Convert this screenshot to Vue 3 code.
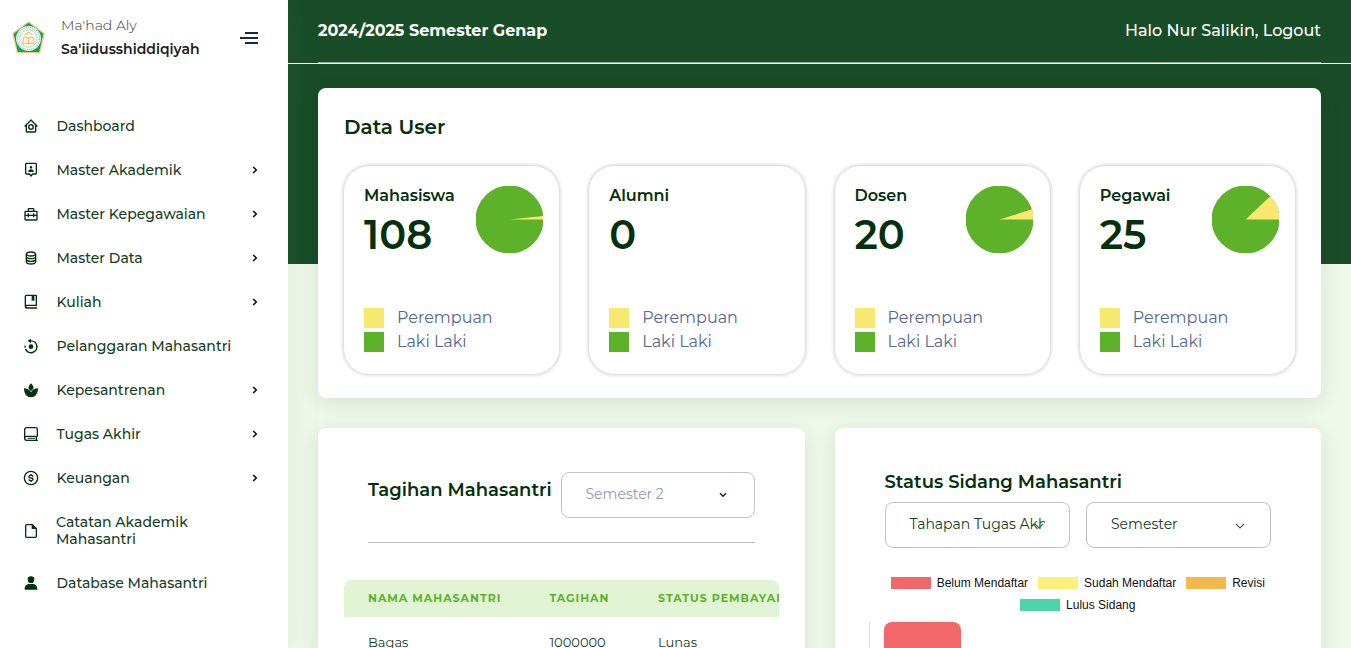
<script setup>
const menu = [
  { label: 'Dashboard', icon: 'home' },
  { label: 'Master Akademik', icon: 'badge', more: true },
  { label: 'Master Kepegawaian', icon: 'toolbox', more: true },
  { label: 'Master Data', icon: 'data', more: true },
  { label: 'Kuliah', icon: 'book', more: true },
  { label: 'Pelanggaran Mahasantri', icon: 'rotate' },
  { label: 'Kepesantrenan', icon: 'spa', more: true },
  { label: 'Tugas Akhir', icon: 'journal', more: true },
  { label: 'Keuangan', icon: 'coin', more: true },
  { label: 'Catatan Akademik Mahasantri', icon: 'file', tall: true },
  { label: 'Database Mahasantri', icon: 'person' },
]

const icons = {
  home: [{ d: 'M3 13h1v7c0 1.100.9 2 2 2h12c1.100 0 2-.9 2-2v-7h1a1 1 0 0 0 .7-1.700l-9-9a1 1 0 0 0-1.400 0l-9 9A1 1 0 0 0 3 13zm9-8.600 6 6V20H6v-9.600l6-6z' }, { d: 'M12 18c2.700 0 4.500-1.800 4.500-4.500S14.700 9 12 9s-4.500 1.800-4.500 4.500S9.300 18 12 18zm0-6.800c1.400 0 2.300.9 2.300 2.300s-.9 2.300-2.300 2.300-2.300-.9-2.300-2.300.9-2.300 2.300-2.300z' }],
  badge: [{ d: 'M12 10c1.200 0 2-.9 2-2s-.9-2-2-2-2 .9-2 2 .8 2 2 2zm4 4c0-2-1.800-3-4-3s-4 1-4 3v1h8v-1z' }, { d: 'M19 1H5a2 2 0 0 0-2 2v14c0 1.100.9 2 2 2h4l3 3.500 3-3.500h4a2 2 0 0 0 2-2V3a2 2 0 0 0-2-2zM5 17V3h14v14h-4.800L12 19.200 9.800 17H5z' }],
  toolbox: [{ d: 'M20 7h-3V5a2 2 0 0 0-2-2H9a2 2 0 0 0-2 2v2H4a2 2 0 0 0-2 2v11a2 2 0 0 0 2 2h16a2 2 0 0 0 2-2V9a2 2 0 0 0-2-2zM9 5h6v2H9V5zM4 9h16v4h-3v-2h-2v2H9v-2H7v2H4V9zm0 11v-5h3v2h2v-2h6v2h2v-2h3v5H4z' }],
  data: [{ d: 'M20 6c0-2.200-3.600-4-8-4S4 3.800 4 6v12c0 2.200 3.600 4 8 4s8-1.800 8-4V6zm-8-2c3.700 0 6 1.400 6 2s-2.300 2-6 2-6-1.400-6-2 2.300-2 6-2zM6 8.700C7.500 9.500 9.600 10 12 10s4.500-.5 6-1.300V10c0 .6-2.300 2-6 2s-6-1.400-6-2V8.700zm0 4c1.500.8 3.600 1.300 6 1.300s4.500-.5 6-1.300V14c0 .6-2.300 2-6 2s-6-1.400-6-2v-1.300zM12 20c-3.700 0-6-1.400-6-2v-1.300c1.500.8 3.600 1.300 6 1.300s4.500-.5 6-1.300V18c0 .6-2.300 2-6 2z' }],
  book: [{ d: 'M19 1H5a2.500 2.500 0 0 0-2.500 2.500V19A3 3 0 0 0 5.500 22H21v-2H6a1 1 0 0 1 0-2h15V3a2 2 0 0 0-2-2zm0 15H4.500V4a1 1 0 0 1 1-1H13v8l2-1.500 2 1.500V3h2v13z' }],
  rotate: [{ d: 'M12 16.500a3.500 3.500 0 1 0 0-7 3.500 3.500 0 0 0 0 7z' }, { d: 'M12 3.200V1L7 4.300 12 8V5.400a7.700 7.700 0 1 1-7.200 10.500l-2.200.8A10 10 0 1 0 12 3.200z' }, { d: 'M2.200 11.200l2.200.5-.2 2.500H1.900z' }],
  spa: [{ d: 'M16 9.500 12 14l-4-4.500C8.500 6.500 10 3.500 12 2c2 1.500 3.500 4.500 4 7.500z' }, { d: 'M1.500 9.500c4.700 0 8.500 2 10.500 6 2-4 5.800-6 10.500-6C22.500 18 18 23 12 23S1.500 18 1.500 9.500z' }],
  journal: [{ d: 'M19 1.500H5.500A4 4 0 0 0 1.500 5.500v13a4 4 0 0 0 4 4h16a1 1 0 0 0 0-2h-.500v-4a2 2 0 0 0 1.500-2V5a3.500 3.500 0 0 0-3.500-3.500zM5.500 3.500H19A1.500 1.500 0 0 1 20.500 5v9.500h-15c-.7 0-1.400.2-2 .5V5.500c0-1.100.9-2 2-2zm13.500 17H5.500a2 2 0 0 1 0-4H19v4z' }, { d: 'M7 17.700h11v1.500H7z' }],
  coin: [{ d: 'M12 1a11 11 0 1 0 0 22 11 11 0 0 0 0-22zm0 20a9 9 0 1 1 0-18 9 9 0 0 1 0 18z' }, { d: 'M12 11c-1.700 0-2-.5-2-1s.6-1 2-1 1.800.7 1.800 1.200h2c0-1.500-1-2.600-2.700-3V6h-2v1.200C8.900 7.600 8 8.900 8 10c0 1.200.7 3 4 3 1.600 0 2 .6 2 1s-.5 1.100-2 1.100-2.200-.8-2.200-1.400h-2c0 1.400 1.100 2.800 3.200 3.200V18h2v-1.100c2.200-.4 3-1.800 3-2.900 0-1-.5-3-4-3z' }],
  file: [{ d: 'M14.500 1.500H5.500A2.500 2.500 0 0 0 3 4v16a2.500 2.500 0 0 0 2.500 2.500h13A2.500 2.500 0 0 0 21 20V8zM19 20c0 .3-.2.500-.5.500h-13A.5.5 0 0 1 5 20V4c0-.3.2-.5.500-.5H13V9h6z' }],
  person: [{ d: 'M12 12a5 5 0 1 0 0-10 5 5 0 0 0 0 10zM2.500 20.500C2.500 16 6 13.500 9 13.500h6c3 0 6.500 2.500 6.500 7v1.500h-19z' }],
}

const pie = { r: 34, c: 33.5 }
const slice = (deg) => {
  const a = (deg * Math.PI) / 180
  const x = pie.c + pie.r * Math.cos(a)
  const y = pie.c - pie.r * Math.sin(a)
  return `M${pie.c} ${pie.c}H${pie.c + pie.r}A${pie.r} ${pie.r} 0 0 0 ${x} ${y}Z`
}

const stats = [
  { label: 'Mahasiswa', total: 108, angle: 6 },
  { label: 'Alumni', total: 0 },
  { label: 'Dosen', total: 20, angle: 17.5 },
  { label: 'Pegawai', total: 25, angle: 43.2 },
]

const legend = [
  [
    { label: 'Belum Mendaftar', tone: 'red' },
    { label: 'Sudah Mendaftar', tone: 'yellow' },
    { label: 'Revisi', tone: 'orange' },
  ],
  [{ label: 'Lulus Sidang', tone: 'teal' }],
]
</script>

<template>
  <div class="page">
    <aside class="sidebar">
      <div class="brand">
        <svg class="logo" viewBox="0 0 34 34">
          <path d="M17 1 33 13 28.500 32.500H5.500L1 13Z" fill="#12a05c" stroke="#f0c67e" stroke-width="1.300" stroke-linejoin="round" />
          <circle cx="17" cy="18" r="12.800" fill="#fff" />
          <circle cx="17" cy="18" r="11.500" fill="none" stroke="#8fd3b0" stroke-width="1.300" stroke-dasharray="1.500 .8" />
          <circle cx="17" cy="18" r="9" fill="#fdf8ea" stroke="#8fd3b0" stroke-width=".8" />
          <path d="M11.500 17.500q3-1.500 5.500.5q2.500-2 5.500-.5v6q-3-1.500-5.500.3q-2.500-1.800-5.500-.3zM17 18v6M13 14.500l4-3 4 3" fill="none" stroke="#efc274" stroke-width="1.200" />
        </svg>
        <div class="brand-text">
          <span class="brand-top">Ma'had Aly</span>
          <span class="brand-name">Sa'iidusshiddiqiyah</span>
        </div>
        <svg class="burger" viewBox="0 0 18 12"><path d="M5 0h13v2H5zM0 5h18v2H0zM5 10h13v2H5z" fill="#16264f" /></svg>
      </div>
      <nav class="menu">
        <a v-for="item in menu" :key="item.label" class="item" :class="{ tall: item.tall }">
          <svg class="icon" viewBox="0 0 24 24"><path v-for="p in icons[item.icon]" :key="p.d" :d="p.d" fill-rule="evenodd" /></svg>
          <span class="item-label">{{ item.label }}</span>
          <svg v-if="item.more" class="arrow" viewBox="0 0 6 8"><path d="M1.200 1 4.300 4 1.200 7" /></svg>
        </a>
      </nav>
    </aside>

    <main class="main">
      <header class="topbar">
        <div class="topbar-row">
          <span class="period">2024/2025 Semester Genap</span>
          <span class="hello">Halo Nur Salikin, Logout</span>
        </div>
      </header>

      <div class="content">
        <section class="card users">
          <h2 class="users-title">Data User</h2>
          <div class="stats">
            <article v-for="s in stats" :key="s.label" class="stat">
              <div class="stat-top">
                <div>
                  <div class="stat-label">{{ s.label }}</div>
                  <div class="stat-total">{{ s.total }}</div>
                </div>
                <svg v-if="s.angle" class="pie" viewBox="0 0 67 67">
                  <circle :cx="pie.c" :cy="pie.c" :r="pie.r" fill="#5eb229" />
                  <path :d="slice(s.angle)" fill="#f7e86f" />
                </svg>
              </div>
              <ul class="keys">
                <li><i class="swatch female"></i><span>Perempuan</span></li>
                <li><i class="swatch male"></i><span>Laki Laki</span></li>
              </ul>
            </article>
          </div>
        </section>

        <div class="columns">
          <section class="card bills">
            <div class="bills-head">
              <h3 class="title">Tagihan Mahasantri</h3>
              <div class="select muted">
                <span>Semester 2</span>
                <svg class="caret" viewBox="0 0 8 6"><path d="M1 1.200 4 4.200 7 1.200" /></svg>
              </div>
            </div>
            <div class="table">
              <div class="row thead"><span>NAMA MAHASANTRI</span><span>TAGIHAN</span><span>STATUS PEMBAYARAN</span></div>
              <div class="row tbody"><span>Bagas</span><span>1000000</span><span>Lunas</span></div>
            </div>
          </section>

          <section class="card status">
            <h3 class="title">Status Sidang Mahasantri</h3>
            <div class="selects">
              <div class="select">
                <span>Tahapan Tugas Akhir</span>
                <svg class="caret thin" viewBox="0 0 10 6"><path d="M.8.8 5 5 9.200.8" /></svg>
              </div>
              <div class="select">
                <span>Semester</span>
                <svg class="caret thin" viewBox="0 0 10 6"><path d="M.8.8 5 5 9.200.8" /></svg>
              </div>
            </div>
            <div class="legend">
              <div v-for="(line, i) in legend" :key="i" class="legend-line">
                <span v-for="l in line" :key="l.label" class="legend-item"><i class="box" :class="l.tone"></i>{{ l.label }}</span>
              </div>
            </div>
            <div class="plot"><div class="bar"></div></div>
          </section>
        </div>
      </div>
    </main>
  </div>
</template>

<style>
html, body { margin: 0; overflow: hidden; }
</style>

<style scoped>
* { box-sizing: border-box; }
.page {
  display: flex;
  width: 1351px;
  height: 648px;
  overflow: hidden;
  background: #eef8e9;
  color: #04300d;
  font-family: Montserrat, Inter, "Liberation Sans", sans-serif;
}
.sidebar {
  position: relative;
  z-index: 2;
  flex: 0 0 288px;
  height: 648px;
  background: #fff;
  box-shadow: 0 0 30px 2px rgba(112, 144, 130, 0.1);
}
.brand { display: flex; align-items: flex-start; height: 104px; padding: 16px 30px 0 12px; }
.logo { width: 33px; height: 33px; margin-top: 5px; }
.brand-text { display: flex; flex-direction: column; margin-left: 16px; line-height: 24px; margin-top: -3px; }
.brand-top { font-size: 14px; font-weight: 300; color: #333; }
.brand-name { font-size: 14px; font-weight: 600; color: #1c1c1c; white-space: nowrap; }
.burger { width: 18px; height: 12px; margin: 16px 0 0 auto; }
.item { display: flex; align-items: center; height: 44px; padding: 0 30.500px 0 23px; }
.item.tall { height: 61px; }
.icon { width: 16px; height: 16px; fill: #04300d; flex: none; }
.item-label { width: 180px; margin-left: 17.500px; font-size: 14px; font-weight: 500; line-height: 17px; color: #12401d; }
.tall .item-label { width: 150px; margin-left: 17px; }
.arrow { width: 6px; height: 8px; margin-left: auto; }
.arrow path { fill: none; stroke: #101010; stroke-width: 1.600; }

.main {
  flex: 1;
  min-width: 0;
  background: linear-gradient(#184d27 264px, #eef8e9 264px);
}
.topbar { height: 64px; padding: 0 30px; border-bottom: 1px solid #fff; }
.topbar-row {
  display: flex;
  justify-content: space-between;
  align-items: center;
  height: 63px;
  padding-bottom: 1px;
  border-bottom: 1px solid #94ad9a;
  color: #fff;
  font-size: 16px;
}
.period { font-weight: 700; }
.hello { font-weight: 500; }
.content { padding: 24px 30px 0; }
.card { background: #fff; border-radius: 8px; box-shadow: 0 5px 20px rgba(0, 30, 0, 0.1); }
.users { height: 310px; padding: 26px 26px 0; }
h2, h3 { margin: 0; }
.users-title { font-size: 20px; line-height: 26px; font-weight: 600; }
.stats { display: grid; grid-template-columns: repeat(4, 1fr); gap: 30px; margin-top: 26px; }
.stat { height: 208px; padding: 20px 16.300px 0 20px; border-radius: 25px; box-shadow: 0 0 4px rgba(0, 0, 0, 0.3); }
.stat-top { display: flex; justify-content: space-between; height: 122px; }
.stat-label { font-size: 16px; line-height: 20px; font-weight: 600; }
.stat-total { font-size: 40px; line-height: 48px; margin-top: 5px; font-weight: 600; }
.pie { width: 67px; height: 67px; }
.keys { margin: 0; padding: 0; list-style: none; }
.keys li { display: flex; align-items: center; height: 20px; margin-bottom: 4px; font-size: 16px; line-height: 20px; font-weight: 400; color: #57678f; }
.keys span { margin-top: -1px; }
.swatch { width: 20px; height: 20px; margin-right: 13px; }
.female { background: #f7e86f; }
.male { background: #5eb229; }

.columns { display: grid; grid-template-columns: 1fr 1fr; gap: 30px; margin-top: 30px; }
.columns .card { height: 300px; }
.title { font-size: 18px; line-height: 24px; font-weight: 600; white-space: nowrap; }
.bills-head { display: flex; justify-content: space-between; height: 115px; margin: 0 50px; padding-top: 44px; border-bottom: 1px solid #bdbdbd; }
.bills-head .title { margin-top: 6px; }
.select {
  position: relative;
  width: 185px;
  height: 46px;
  padding: 0 24px;
  border: 1px solid #c2c2c2;
  border-radius: 8px;
  font-size: 14px;
  line-height: 43px;
}
.select span { display: block; overflow: hidden; white-space: nowrap; color: #12401d; }
.select.muted { width: 194px; }
.select.muted span { color: #8e9bae; }
.caret { position: absolute; right: 27px; top: 19px; width: 8px; height: 6px; fill: none; stroke: #1b2c4a; stroke-width: 1.600; }
.caret.thin { right: 25px; top: 20px; width: 10px; stroke: #2e6b4b; stroke-width: 1.200; }
.table { width: 435px; margin: 37px 0 0 26px; overflow: hidden; border-radius: 8px 8px 0 0; }
.row { display: grid; grid-template-columns: 181.400px 108.600px 160px; height: 37px; padding-left: 24px; white-space: nowrap; }
.thead { background: #e1f5d5; color: #5eb229; font-size: 11px; font-weight: 700; line-height: 37px; letter-spacing: 1px; }
.tbody { height: 52px; font-size: 13px; line-height: 51px; color: #12401d; }
.status { padding: 42px 50px 0; }
.selects { display: flex; justify-content: space-between; margin-top: 8px; }
.legend { margin: 24px -2px 0; font: 12px/22px "Liberation Sans", Arial, sans-serif; color: #111; }
.legend-line { display: flex; justify-content: center; gap: 10px; height: 22px; }
.legend-item { display: flex; align-items: center; white-space: nowrap; }
.box { width: 40px; height: 12px; margin-right: 6px; }
.red { background: #f2686a; }
.yellow { background: #fbf17b; }
.orange { background: #f2b84b; }
.teal { background: #4dd4a9; }
.plot { height: 60px; margin: 6px 0 0 -16px; padding-left: 14px; border-left: 1px solid #e2e2e2; }
.bar { width: 77px; height: 60px; border-radius: 8px 8px 0 0; background: #f2686a; }
</style>
